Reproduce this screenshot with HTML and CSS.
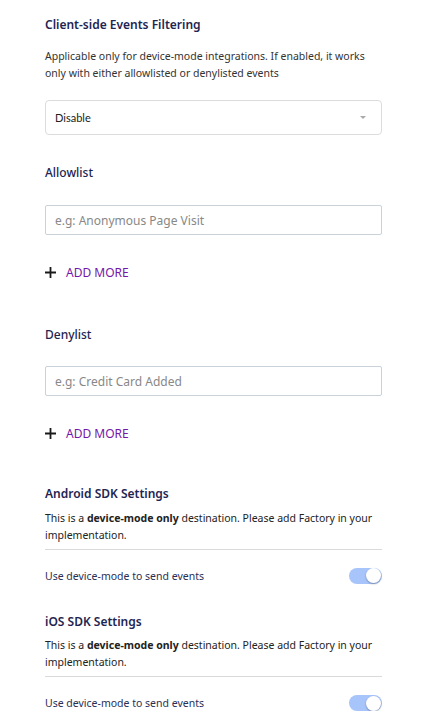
FILE: index.html
```html
<!DOCTYPE html>
<html>
<head>
<meta charset="utf-8">
<link rel="stylesheet" href="styles.css">
</head>
<body>
<main class="page">
  <h3 class="title t-first">Client-side Events Filtering</h3>
  <p class="desc">Applicable only for device-mode integrations. If enabled, it works only with either allowlisted or denylisted events</p>
  <div class="select">
    <span class="select-value">Disable</span>
    <span class="caret"></span>
  </div>

  <h4 class="label label-allow">Allowlist</h4>
  <div class="input input-allow"><span class="placeholder">e.g: Anonymous Page Visit</span></div>
  <button class="add-more">
    <svg class="plus" width="11" height="11" viewBox="0 0 11 11"><path d="M5.5 0v11M0 5.5h11" stroke="#1a1a1a" stroke-width="1.8"/></svg>
    <span>ADD MORE</span>
  </button>

  <h4 class="label label-deny">Denylist</h4>
  <div class="input input-deny"><span class="placeholder">e.g: Credit Card Added</span></div>
  <button class="add-more">
    <svg class="plus" width="11" height="11" viewBox="0 0 11 11"><path d="M5.5 0v11M0 5.5h11" stroke="#1a1a1a" stroke-width="1.8"/></svg>
    <span>ADD MORE</span>
  </button>

  <section class="sdk sdk-android">
    <h3 class="title">Android SDK Settings</h3>
    <p class="sdk-text">This is a <b>device-mode only</b> destination. Please add Factory in your implementation.</p>
    <div class="row">
      <span>Use device-mode to send events</span>
      <span class="toggle"><span class="knob"></span></span>
    </div>
  </section>

  <section class="sdk sdk-ios">
    <h3 class="title">iOS SDK Settings</h3>
    <p class="sdk-text">This is a <b>device-mode only</b> destination. Please add Factory in your implementation.</p>
    <div class="row">
      <span>Use device-mode to send events</span>
      <span class="toggle"><span class="knob"></span></span>
    </div>
  </section>
</main>
</body>
</html>
```
FILE: styles.css
```css
* { box-sizing: border-box; }
html, body { margin: 0; padding: 0; background: #fff; }
body {
  font-family: "Noto Sans", "Open Sans", sans-serif;
  color: #333;
}
.page {
  width: 337px;
  margin-left: 45px;
  display: flex;
  flex-direction: column;
}
.title {
  margin: 0;
  font-size: 12px;
  line-height: 18px;
  font-weight: 600;
  color: #1e2552;
}
.t-first { margin-top: 16px; }
.desc {
  margin: 14px 0 0;
  font-size: 10.5px;
  line-height: 17px;
  color: #333;
}
.select {
  margin-top: 18px;
  height: 35px;
  border: 1px solid #dcdcdc;
  border-radius: 4px;
  display: flex;
  align-items: center;
  justify-content: space-between;
  padding: 0 15px 0 9px;
}
.select-value {
  font-family: "Lato", sans-serif;
  font-size: 11px;
  color: #222;
}
.caret {
  width: 0; height: 0;
  border-left: 3.5px solid transparent;
  border-right: 3.5px solid transparent;
  border-top: 3.5px solid #aaa;
}
.label {
  margin: 0;
  font-size: 12px;
  line-height: 18px;
  font-weight: 500;
  color: #1e2552;
}
.label-allow { margin-top: 29px; }
.label-deny { margin-top: 45px; }
.input {
  height: 30px;
  border: 1px solid #c9d1d9;
  border-radius: 2px;
  display: flex;
  align-items: center;
  padding: 0 9px;
}
.input-allow { margin-top: 23px; }
.input-deny { margin-top: 22px; }
.placeholder {
  font-size: 12px;
  color: #888;
}
.add-more {
  margin-top: 28px;
  background: none;
  border: 0;
  padding: 0;
  height: 18px;
  display: flex;
  align-items: center;
  gap: 10px;
  font-family: "Noto Sans", sans-serif;
  font-size: 12px;
  font-weight: 400;
  color: #7417a8;
  cursor: pointer;
  align-self: flex-start;
}
.sdk { display: flex; flex-direction: column; }
.sdk-android { margin-top: 43px; }
.sdk-ios { margin-top: 29px; }
.sdk-text {
  margin: 6.5px 0 0;
  padding-bottom: 5px;
  border-bottom: 1px solid #dadada;
  font-size: 10.5px;
  line-height: 17px;
  color: #222;
}
.sdk-text b { font-weight: 700; color: #222; }
.row {
  margin-top: 18px;
  height: 16px;
  display: flex;
  align-items: center;
  justify-content: space-between;
  font-size: 10.5px;
  color: #2a2f55;
}
.toggle {
  width: 33px;
  height: 16px;
  border-radius: 8px;
  background: #a7c4fb;
  position: relative;
}
.knob {
  position: absolute;
  right: 1px;
  top: 0.5px;
  width: 15px;
  height: 15px;
  border-radius: 50%;
  background: #fff;
  box-shadow: 0 1px 2px rgba(0,0,0,0.3);
}
```
